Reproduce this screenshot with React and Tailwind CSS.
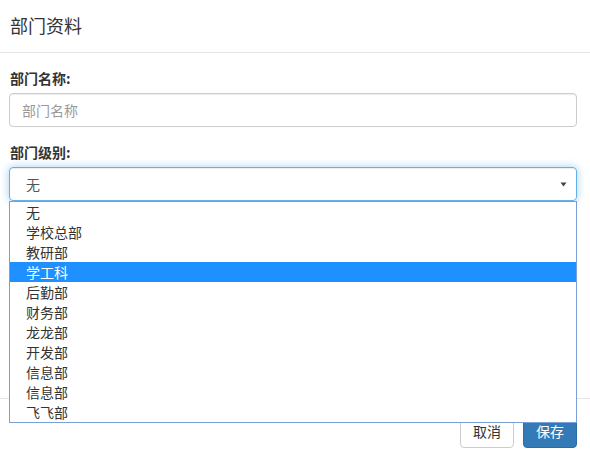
import React from "react";

const items = ["无", "学校总部", "教研部", "学工科", "后勤部", "财务部", "龙龙部", "开发部", "信息部", "信息部", "飞飞部"];

export default function App() {
  const font = { fontFamily: '"Noto Sans CJK SC", "Liberation Sans", sans-serif' };
  return (
    <div className="w-[590px] h-[459px] overflow-hidden bg-white text-[#333]" style={font}>
      <div className="h-[53px] border-b border-[#e5e5e5] pt-[14px] pl-[10px]">
        <h4 className="text-[18px] leading-[22px] font-normal">部门资料</h4>
      </div>
      <div className="h-[345px] pl-[9px] pr-[13px] pt-[15px]">
        <div className="mb-[15px]">
          <label className="block pl-px text-[14px] leading-[20px] font-bold mb-[5px]">部门名称:</label>
          <div className="h-[34px] border border-[#ccc] rounded-[4px] pl-[12px] flex items-center text-[14px] text-[#999] shadow-[inset_0_1px_1px_rgba(0,0,0,0.075)]">
            部门名称
          </div>
        </div>
        <div>
          <label className="block pl-px text-[14px] leading-[20px] font-bold mb-[5px]">部门级别:</label>
          <div className="relative">
            <div className="h-[34px] border border-[#66afe9] rounded-[4px] pl-[16px] pr-[8px] flex items-center justify-between text-[14px] text-[#555] shadow-[inset_0_1px_1px_rgba(0,0,0,0.075),0_0_8px_rgba(102,175,233,0.6)]">
              <span>无</span>
              <svg width="7" height="5" viewBox="0 0 7 5" className="mr-[1px]">
                <path d="M0.5 0.5 H6.5 L3.5 4.5 Z" fill="#444" />
              </svg>
            </div>
            <div className="absolute left-0 right-0 top-full z-10 bg-white border border-[#7a9fd6]">
              {items.map((t, i) => (
                <div
                  key={i}
                  className={
                    "h-[20px] leading-[20px] pl-[16px] text-[14px] " +
                    (i === 3 ? "bg-[#1e90ff] text-white" : "text-[#333]")
                  }
                >
                  {t}
                </div>
              ))}
            </div>
          </div>
        </div>
      </div>
      <div className="border-t border-[#e5e5e5] pt-[15px] pr-[13px] flex justify-end gap-[9px]">
        <button className="h-[34px] w-[54px] border border-[#ccc] rounded-[4px] bg-white text-[14px] text-[#333] flex items-center justify-center">取消</button>
        <button className="h-[34px] w-[54px] border border-[#2e6da4] rounded-[4px] bg-[#337ab7] text-[14px] text-white flex items-center justify-center">保存</button>
      </div>
    </div>
  );
}
